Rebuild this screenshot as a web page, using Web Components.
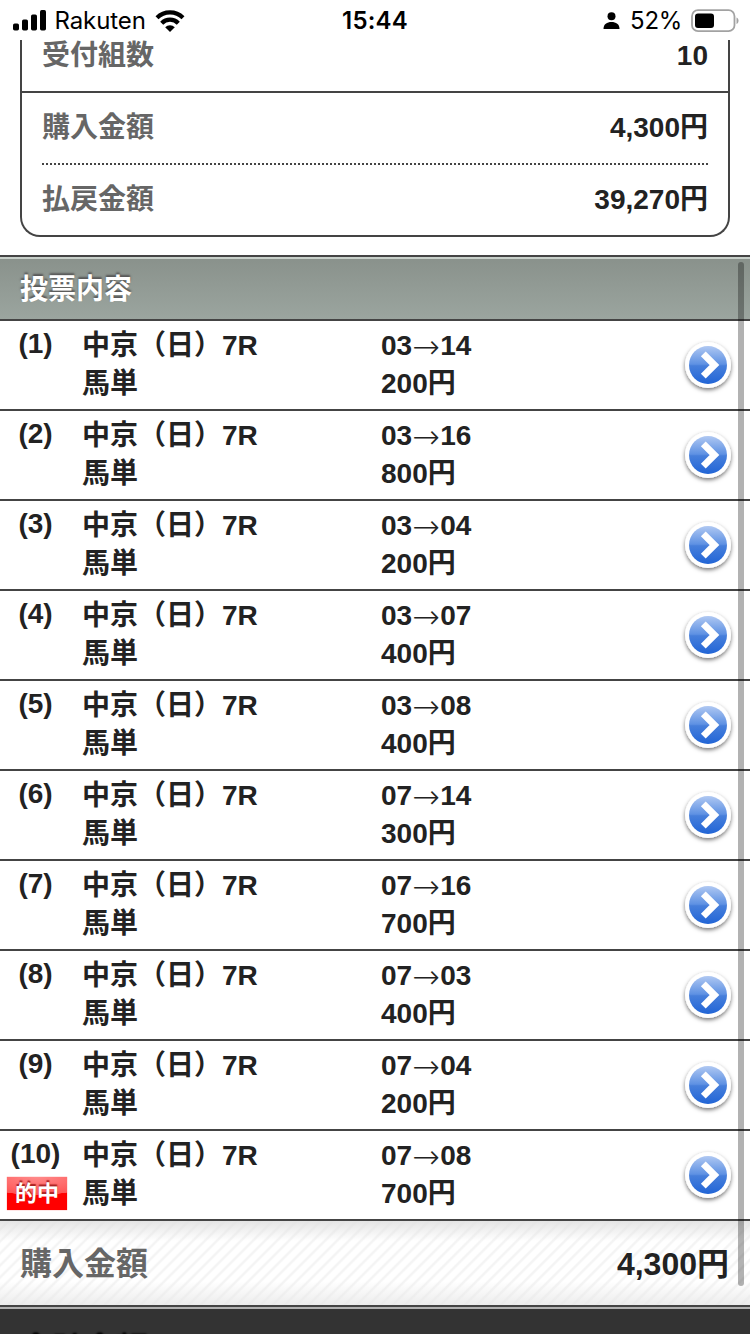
<!DOCTYPE html>
<html lang="ja">
<head>
<meta charset="utf-8">
<title>投票内容</title>
<style>
html,body{margin:0;padding:0;overflow:hidden;background:#fff}
body{font-family:"Liberation Sans","Noto Sans CJK JP",sans-serif;color:#222;width:750px;height:1334px}
</style>
</head>
<body>
<vote-screen></vote-screen>
<script>
const define = (name, html, setup) => customElements.define(name, class extends HTMLElement {
  connectedCallback() {
    if (this.shadowRoot) return;
    const root = this.attachShadow({ mode: 'open' });
    root.innerHTML = html;
    if (setup) setup.call(this, root);
  }
});

define('status-bar', `
<style>
:host{display:grid;grid-template-columns:1fr auto 1fr;align-items:center;height:40px;background:#fff;color:#000;font:400 24px/40px Inter,sans-serif;padding:1px 11px 0 13px;box-sizing:border-box}
div{display:flex;align-items:center}
.r{justify-content:flex-end}
b{font-weight:600;font-size:24px;letter-spacing:.2px;margin-right:2px}
.c{letter-spacing:-.1px;margin:0 9px 0 7.500px}
.p{margin:0 9px 0 10px;letter-spacing:-.3px}
svg{display:block;flex:none;margin-top:-1px}
</style>
<div><svg width="34" height="22" viewBox="0 0 34 22"><rect x="0" y="13.5" width="6" height="7" rx="1.7"/><rect x="9" y="9.5" width="6" height="11" rx="1.7"/><rect x="18" y="4.5" width="6" height="16" rx="1.7"/><rect x="27" y="0" width="6" height="20.5" rx="1.7"/></svg>
<span class="c">Rakuten</span>
<svg width="30" height="22" viewBox="0 0 30 22"><g fill="none" stroke="#000" stroke-width="4.2"><path d="M2 7.700a18.5 18.5 0 0 1 26 0"/><path d="M6.700 13.2a11.500 11.500 0 0 1 16.600 0"/></g><path d="M15 22l-4.800-4.700a6.800 6.800 0 0 1 9.600 0z"/></svg></div>
<b>15:44</b>
<div class="r"><svg width="17" height="18" viewBox="0 0 17 18"><circle cx="8.5" cy="4.2" r="4"/><path d="M.5 17C.5 12 4 10 8.500 10s8 2 8 7z"/></svg>
<span class="p">52%</span>
<svg width="48" height="24" viewBox="0 0 48 24"><rect x="1" y="1.2" width="42.500" height="21" rx="6" fill="none" stroke="#a2a2a2" stroke-width="1.8"/><rect x="4" y="4.500" width="19" height="14.500" rx="3"/><path d="M45.500 8.500c2.700 1.200 2.700 5.300 0 6.500z" fill="#a2a2a2"/></svg></div>`);

define('summary-line', `
<style>
:host{display:flex;justify-content:space-between;align-items:center;font-weight:700;font-size:28px;line-height:40px}
.l{color:#666}
</style><span class="l"><slot name="label"></slot></span><slot></slot>`);

define('summary-card', `
<style>
:host{display:block;box-sizing:border-box;margin:0 20px;height:197px;border:2px solid #444;border-top:0;border-radius:0 0 20px 20px}
summary-line{padding:0 20px;box-sizing:border-box}
.a{height:53px;padding-bottom:20px;border-bottom:2px solid #444}
.b{height:70px}
.d{margin:0 20px;height:2px;background:repeating-linear-gradient(90deg,#444 0 2px,transparent 2px 4px)}
.e{height:70px}
</style>
<summary-line class="a"><span slot="label">受付組数</span>10</summary-line>
<summary-line class="b"><span slot="label">購入金額</span>4,300円</summary-line>
<div class="d"></div>
<summary-line class="e"><span slot="label">払戻金額</span>39,270円</summary-line>`);

define('section-title', `
<style>
:host{display:flex;align-items:center;box-sizing:border-box;margin-top:18px;height:66px;border-top:2px solid #444;border-bottom:2px solid #444;box-shadow:inset 0 2px #c8d0ca;background:linear-gradient(#89918b,#9ba59f);color:#fff;font-weight:700;font-size:28px;line-height:40px;padding:4px 20px 0;text-shadow:0 -2px 2px #555}
</style><slot></slot>`);

define('arrow-button', `
<style>
:host{display:block;width:60px;height:60px}svg{display:block}
</style>
<svg width="60" height="60" viewBox="0 0 60 60">
<defs><linearGradient id="g" x2="0" y2="1"><stop stop-color="#b0c8f2"/><stop offset=".48" stop-color="#5e91e3"/><stop offset=".52" stop-color="#477fdb"/><stop offset="1" stop-color="#2165d6"/></linearGradient>
<filter id="s" x="-20%" y="-20%" width="140%" height="150%"><feDropShadow dx="0" dy="2" stdDeviation="2" flood-color="#000" flood-opacity=".55"/></filter></defs>
<circle cx="30" cy="30" r="23" fill="#fff" filter="url(#s)"/>
<circle cx="30" cy="30" r="19" fill="url(#g)"/>
<path d="M25.300 18.800L36.500 30 25.300 41.200" fill="none" stroke="#fff" stroke-width="6.800"/></svg>`);

define('hit-badge', `
<style>
:host{display:block;width:60px;height:33px;box-sizing:border-box;background:radial-gradient(ellipse 62px 18px at 50% 0,#ff8a8a,#ff5555 98%,transparent 100%),#f00;box-shadow:0 0 1px #f66;color:#fff;font-weight:700;font-size:22px;line-height:34px;text-align:center;text-shadow:0 -2px 1px #a22}
</style><slot></slot>`);

define('bet-row', `
<style>
:host{display:grid;grid-template-columns:71px 298px 1fr 60px;height:90px;box-sizing:border-box;border-bottom:2px solid #444;padding-left:0;padding-right:12px;font-weight:700;font-size:28px;line-height:38px}
.n{display:flex;flex-direction:column;align-items:center;padding-top:4px}
.race{padding:6px 0 0 11px}.pick{padding:6px 0 0 12px}
i{display:inline-block;width:28px;font:200 33px/28px "DejaVu Sans",sans-serif;color:#222;vertical-align:-3px}
.pick div{height:38px}
hit-badge{margin:4px 0 0 3px}
arrow-button{margin-top:14px}
div{white-space:nowrap}
</style>
<div class="n"><span class="no"></span></div>
<div class="race"><div>中京（日）7R</div><div>馬単</div></div>
<div class="pick"><div><span class="from"></span><i>→</i><span class="to"></span></div><div class="yen"></div></div>
<arrow-button></arrow-button>`, function (root) {
  root.querySelector('.no').textContent = '(' + this.getAttribute('no') + ')';
  for (const k of ['from', 'to']) root.querySelector('.' + k).textContent = this.getAttribute(k);
  root.querySelector('.yen').textContent = this.getAttribute('yen') + '円';
  if (this.hasAttribute('hit')) {
    const badge = document.createElement('hit-badge');
    badge.textContent = '的中';
    root.querySelector('.n').append(badge);
  }
});

define('total-bar', `
<style>
:host{display:block;height:84px;background:linear-gradient(rgba(226,226,226,.9),rgba(255,255,255,0) 24%,rgba(255,255,255,0) 72%,rgba(232,232,232,.8)),repeating-linear-gradient(135deg,#fff 0 4px,#f4f4f4 5.500px 6.500px,#fff 8px 8.49px)}
summary-line{height:84px;padding:1px 21px 0 20px;box-sizing:border-box;font-size:32px}
</style><summary-line><span slot="label">購入金額</span>4,300円</summary-line>`);

define('bottom-bar', `
<style>
:host{display:block;box-sizing:border-box;height:29px;border-top:2px solid #444;background:#333;box-shadow:inset 0 2px #b1b1b1;color:#fff;font-weight:700;font-size:32px;overflow:hidden}
div{padding:20px 20px 0;line-height:48px;text-shadow:0 -2px 2px #000}
</style><div><slot></slot></div>`);

define('vote-screen', `
<style>
:host{display:block;position:relative;width:750px;height:1334px;overflow:hidden}
.bar{position:absolute;right:6px;top:262px;width:6px;height:1024px;border-radius:3px;background:rgba(0,0,0,.3)}
</style>
<status-bar></status-bar>
<summary-card></summary-card>
<section-title>投票内容</section-title>
<main></main>
<total-bar></total-bar>
<bottom-bar>合計金額</bottom-bar>
<div class="bar"></div>`, function (root) {
  const bets = [['03','14',200],['03','16',800],['03','04',200],['03','07',400],['03','08',400],['07','14',300],['07','16',700],['07','03',400],['07','04',200],['07','08',700]];
  bets.forEach(([from, to, yen], i) => {
    const row = document.createElement('bet-row');
    row.setAttribute('no', i + 1);
    row.setAttribute('from', from);
    row.setAttribute('to', to);
    row.setAttribute('yen', yen);
    if (i === 9) row.setAttribute('hit', '');
    root.querySelector('main').append(row);
  });
});
</script>
</body>
</html>
